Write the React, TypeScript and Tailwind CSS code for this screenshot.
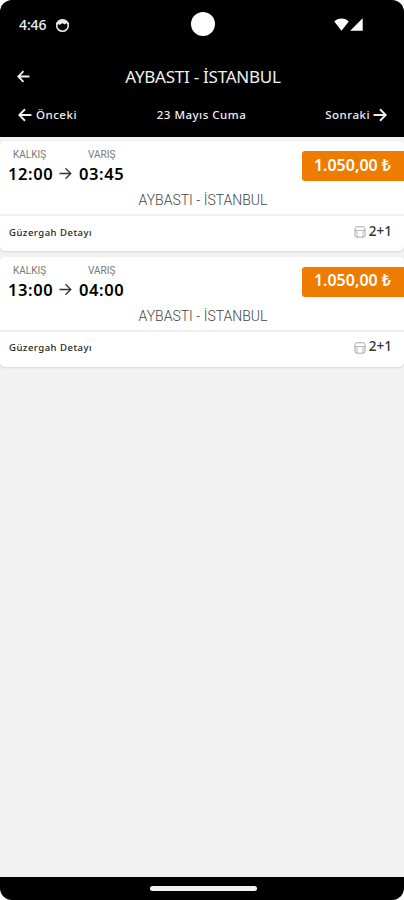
import React from 'react';

interface Trip {
  id: number;
  departure: string;
  arrival: string;
  route: string;
  price: string;
  layout: string;
}

const TRIPS: Trip[] = [
  { id: 1, departure: '12:00', arrival: '03:45', route: 'AYBASTI - İSTANBUL', price: '1.050,00 ₺', layout: '2+1' },
  { id: 2, departure: '13:00', arrival: '04:00', route: 'AYBASTI - İSTANBUL', price: '1.050,00 ₺', layout: '2+1' },
];

function Arrow({ className, flip, weight = 2.4 }: { className: string; flip?: boolean; weight?: number }) {
  return (
    <svg
      viewBox="0 0 24 24"
      fill="none"
      stroke="currentColor"
      strokeWidth={weight}
      className={`${className} shrink-0 ${flip ? 'rotate-180' : ''}`}
    >
      <path d="M1 12h21M12 2.2l9.8 9.8-9.8 9.8" />
    </svg>
  );
}

function StatusBar() {
  return (
    <div className="relative flex h-[50px] items-center justify-between pl-[19px] pr-[41px]">
      <div className="flex items-center gap-2">
        <span className="w-7 whitespace-nowrap font-['Noto_Sans',sans-serif] text-[14px] font-medium leading-none tracking-[-0.1px]">4:46</span>
        <svg viewBox="0 0 14 14" className="h-[15px] w-[15px]">
          <circle cx="7" cy="7" r="5.4" fill="none" stroke="#e8e8e8" strokeWidth="1.5" />
          <path d="M1.5 5.6C2.3 2.8 4.5 1.3 7 1.3s4.7 1.5 5.5 4.3L10.6 5 9.3 6.1 7 5 4.3 6.2z" fill="#e8e8e8" />
          <path d="M0.6 5.2l1.6-1.8v3zM13.4 5.2l-1.6-1.8v3z" fill="#e8e8e8" />
        </svg>
      </div>
      <div className="absolute left-[191px] top-3 h-6 w-6 rounded-full bg-white" />
      <div className="-mt-[2px] flex items-center gap-px">
        <svg viewBox="0 0 15 13" className="h-[13px] w-[15px]">
          <path d="M0.3 3.6C2 1.6 4.6 0.5 7.5 0.5s5.5 1.1 7.2 3.1L7.5 12.8z" fill="#fff" />
        </svg>
        <svg viewBox="0 0 13 13" className="h-[13px] w-[13px]">
          <path d="M12.7 0.3v12.5H0.2z" fill="#fff" />
        </svg>
      </div>
    </div>
  );
}

function Header() {
  return (
    <header className="h-[137px] shrink-0 bg-black text-[#f0f0f0]">
      <StatusBar />
      <div className="flex h-[52px] items-center pl-[17px] pr-[15px]">
        <Arrow flip weight={3.4} className="h-[13px] w-[13px]" />
        <h1 className="flex-1 whitespace-nowrap pt-px text-center font-['Noto_Sans',sans-serif] text-[17px] font-normal tracking-[-0.25px]">
          AYBASTI - İSTANBUL
        </h1>
        <span className="w-[13px]" />
      </div>
      <div className="flex h-[26px] items-center justify-between pl-[18px] pr-[17px] font-['Noto_Sans',sans-serif] text-[11.5px] font-medium tracking-[0.5px]">
        <span className="flex w-[70px] items-center gap-1">
          <Arrow flip weight={3.2} className="h-[14px] w-[14px]" />
          Önceki
        </span>
        <span className="whitespace-nowrap">23 Mayıs Cuma</span>
        <span className="flex w-[72px] items-center justify-end gap-[3px]">
          Sonraki
          <Arrow weight={3.2} className="h-[14px] w-[14px]" />
        </span>
      </div>
    </header>
  );
}

function SeatIcon() {
  return (
    <svg viewBox="0 0 12 12" fill="none" stroke="#a8a8a8" className="mt-[2px] h-3 w-3">
      <rect x="1" y="0.8" width="10" height="10.4" rx="2" />
      <path d="M0.5 4.5h11M3 4.8v6M9 4.8v6" strokeWidth="0.8" />
    </svg>
  );
}

function TripCard({ trip }: { trip: Trip }) {
  return (
    <article className="h-[110px] rounded-[5px] bg-white shadow-[0_1px_2px_rgba(0,0,0,0.12)]">
      <div className="h-[75px] border-b-2 border-[#f0f0f0]">
        <div className="flex h-[45px] justify-between">
          <div className="flex pl-2 pt-[7px] font-['Noto_Sans',sans-serif] text-black">
            <div className="w-[51px]">
              <span className="block pl-[5px] font-[Roboto,sans-serif] text-[10px] leading-[14px] text-[#777]">KALKIŞ</span>
              <span className="block whitespace-nowrap pt-px text-[16.5px] font-semibold leading-[22px] tracking-[0.6px]">{trip.departure}</span>
            </div>
            <Arrow weight={2.4} className="mt-[19px] h-[13px] w-[13px] text-[#333]" />
            <div className="ml-[7px]">
              <span className="block pl-[9px] font-[Roboto,sans-serif] text-[10px] leading-[14px] text-[#777]">VARIŞ</span>
              <span className="block whitespace-nowrap pt-px text-[16.5px] font-semibold leading-[22px] tracking-[0.6px]">{trip.arrival}</span>
            </div>
          </div>
          <div className="mt-[10px] flex h-[30px] w-[102px] items-center justify-end whitespace-nowrap rounded-l-[3px] bg-[#ee7c00] pb-[3px] pr-[13px] font-['Noto_Sans',sans-serif] text-[16px] font-semibold text-white">
            {trip.price}
          </div>
        </div>
        <p className="pl-[2px] pt-px text-center font-[Roboto,sans-serif] text-[14px] font-light leading-[27px] text-[#444]">
          {trip.route}
        </p>
      </div>
      <div className="flex h-[34px] items-center justify-between pl-[9px] pr-3 font-['Noto_Sans',sans-serif]">
        <span className="text-[9.5px] font-medium tracking-[0.5px] text-[#222]">Güzergah Detayı</span>
        <span className="-mt-1 flex items-center gap-[3px] text-[13.5px] font-medium text-[#333]">
          <SeatIcon />
          {trip.layout}
        </span>
      </div>
    </article>
  );
}

export default function App() {
  return (
    <div className="h-[900px] w-[404px] bg-white">
      <div className="flex h-full flex-col overflow-hidden rounded-[12px] bg-[#f2f2f2]">
        <Header />
        <main className="flex flex-1 flex-col gap-[5.5px] pt-1">
          {TRIPS.map((trip) => (
            <TripCard key={trip.id} trip={trip} />
          ))}
        </main>
        <footer className="flex h-[23px] shrink-0 justify-center bg-black pt-[9px]">
          <div className="ml-[2px] h-[5px] w-[107px] rounded-full bg-[#f2f2f2]" />
        </footer>
      </div>
    </div>
  );
}
